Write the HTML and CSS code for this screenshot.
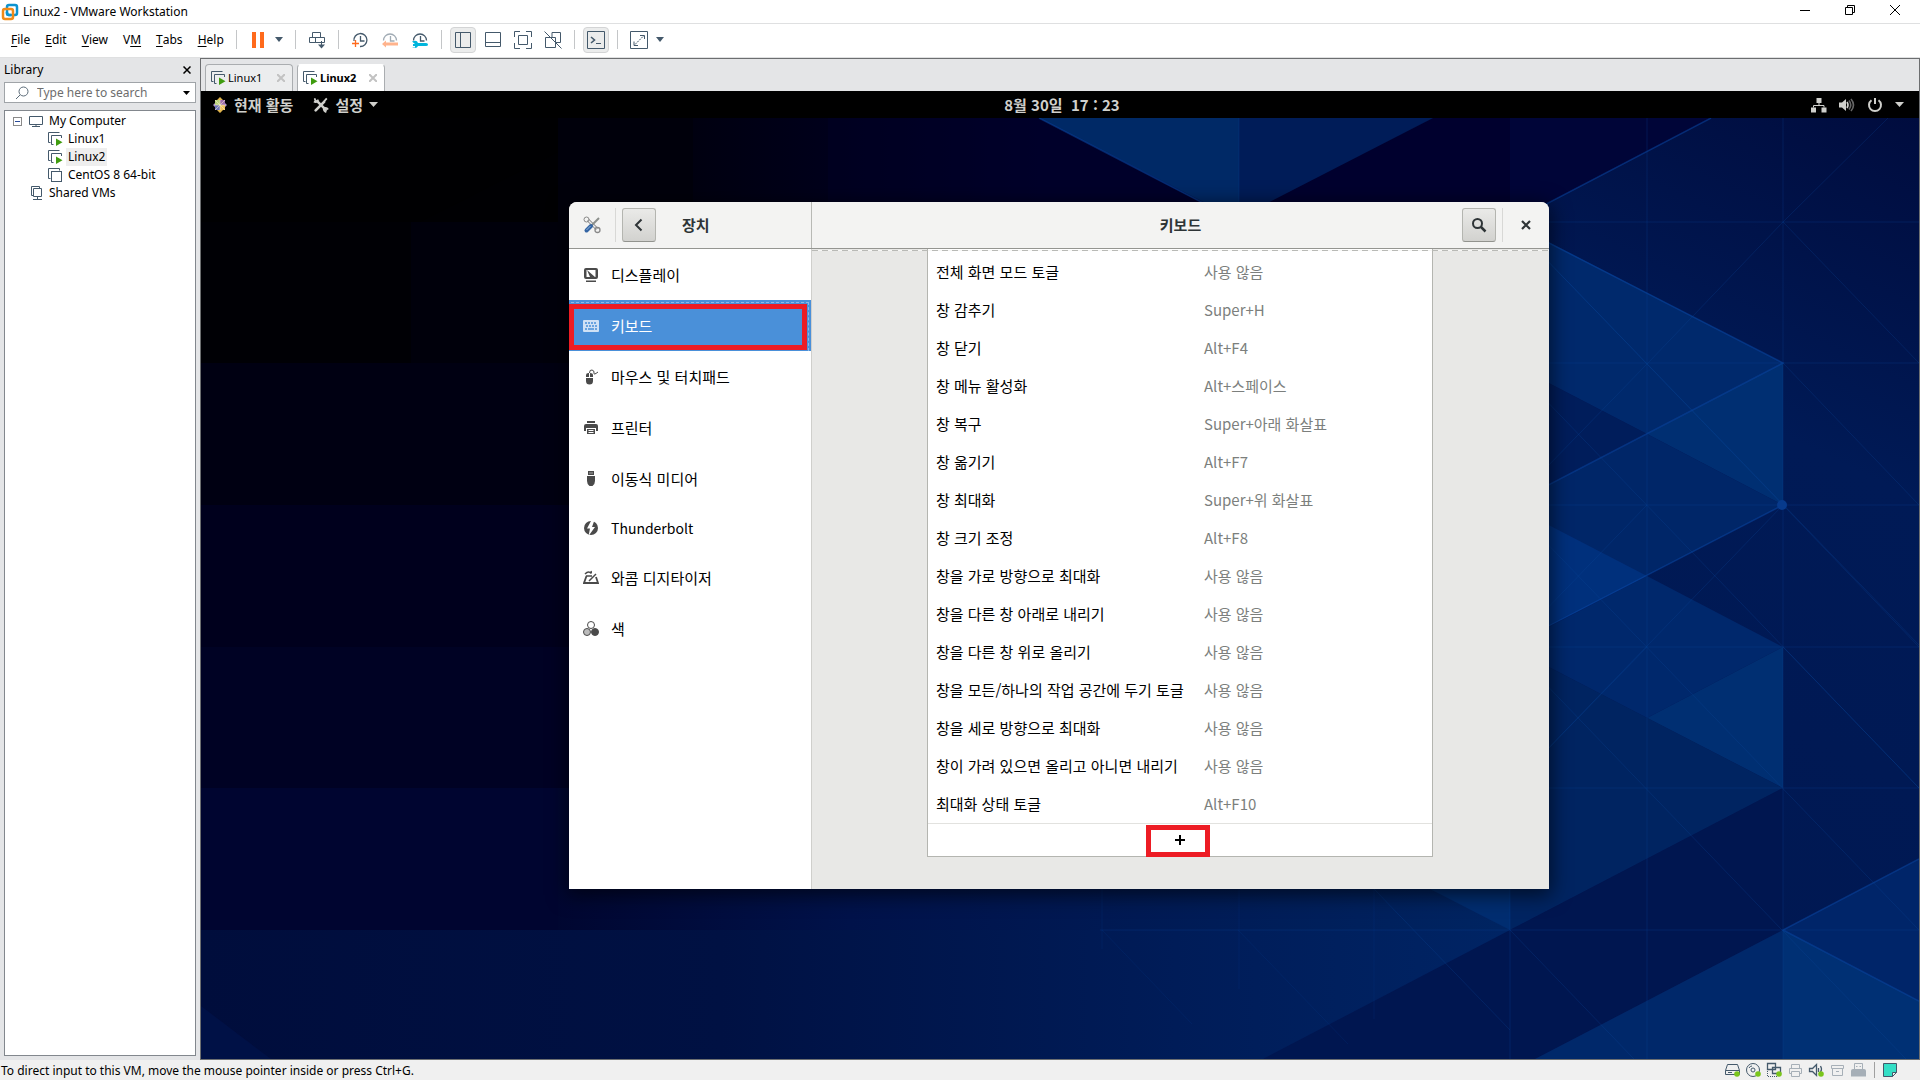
FILE: index.html
```html
<!DOCTYPE html>
<html lang="ko">
<head>
<meta charset="utf-8">
<title>Linux2 - VMware Workstation</title>
<link rel="stylesheet" href="styles.css">
</head>
<body>
<svg class="defs" aria-hidden="true">
  <symbol id="vm" viewBox="0 0 16 16"><path d="M3.500 11.500H1.500V1.500H12.500V3.500" fill="none" stroke="#44596b"/><rect x="4.500" y="4.500" width="10" height="10" fill="#fff" stroke="#44596b"/></symbol>
  <symbol id="vm-on" viewBox="0 0 16 16"><path d="M3.500 11.500H1.500V1.500H12.500M6.500 13.500H4.500V4.500H14.500V7" fill="none" stroke="#44596b"/><path d="M9 7.500v7.500l6.500-3.700z" fill="#3f9c0f"/></symbol>
  <symbol id="clock" viewBox="0 0 18 18"><path d="M2.500 9.500a6.500 6.500 0 1 1 13 0M9.500 5v5h4" fill="none" stroke="currentColor" stroke-width="1.300"/></symbol>
</svg>

<header class="titlebar">
  <svg width="18" height="18" viewBox="0 0 18 18" fill="none" stroke-width="2.500"><rect x="6" y="2" width="10" height="10" rx="2" stroke="#0d93cf"/><rect x="2" y="6" width="10" height="10" rx="2" stroke="#f28a17"/><path d="M6 9v1q0 2 2 2h2" stroke="#0d93cf"/></svg>
  <h1 class="titlebar-text">Linux2 - VMware Workstation</h1>
  <div class="window-buttons">
    <button aria-label="Minimize"><svg width="12" height="12"><path d="M1 6.500h10" stroke="#000"/></svg></button>
    <button aria-label="Restore"><svg width="12" height="12" fill="none" stroke="#000"><path d="M1.500 3.500h7v7h-7zM3.500 3.500v-2h7v7h-2"/></svg></button>
    <button aria-label="Close"><svg width="12" height="12" stroke="#000"><path d="M1 1l10 10M11 1L1 11"/></svg></button>
  </div>
</header>

<div class="menubar">
  <nav class="menu">
    <button><u>F</u>ile</button><button><u>E</u>dit</button><button><u>V</u>iew</button><button>V<u>M</u></button><button><u>T</u>abs</button><button><u>H</u>elp</button>
  </nav>
  <div class="toolbar">
    <i class="sep"></i>
    <button aria-label="Suspend"><svg width="18" height="18"><path d="M3 1h4v16H3zM11 1h4v16h-4z" fill="#ff6a1c"/></svg></button>
    <button class="drop" aria-label="Power options"><svg width="8" height="5"><path d="M0 0h8L4 5z" fill="#44596b"/></svg></button>
    <i class="sep"></i>
    <button aria-label="Send Ctrl+Alt+Del"><svg width="18" height="18" fill="none" stroke="#44596b"><path d="M4.500 1.500h8v5h-8zM1.500 6.500h6v5h-6zM7.500 6.500h9v5h-9zM13.500 10v6"/><path d="M10 13.500h7l-3.500 4z" fill="#44596b" stroke="none"/></svg></button>
    <i class="sep"></i>
    <button aria-label="Take snapshot"><svg width="18" height="18" fill="none" stroke="#44596b" stroke-width="1.300"><path d="M3 10a6.500 6.500 0 1 1 6 5.500M9.500 5v5h4"/><path d="M4.500 9v7M1 12.500h7" stroke="#ff6a1c"/></svg></button>
    <button aria-label="Revert snapshot"><svg class="faded" width="18" height="18"><use href="#clock"/><path d="M1 13l4-3.500v2h12v3H5v2z" fill="#ff6a1c"/></svg></button>
    <button aria-label="Manage snapshots"><svg class="slate" width="18" height="18"><use href="#clock"/><path d="M1 10.500q5-2 6 1.500h8q2 0 2 1.500t-2 1.500H7q-1 3-6 1.500h3v-1.500H2v-2h2z" fill="#00b5dc"/></svg></button>
    <i class="sep"></i>
    <button class="on" aria-label="Show library"><svg width="18" height="18" fill="none" stroke="#44596b"><path d="M1.500 1.500h15v15h-15zM6.500 1.500v15"/></svg></button>
    <button aria-label="Show thumbnails"><svg width="18" height="18" fill="none" stroke="#44596b"><path d="M1.500 1.500h15v14h-15zM1.500 11.500h15"/></svg></button>
    <button aria-label="Full screen"><svg width="18" height="18" fill="none" stroke="#44596b"><path d="M.5 6V.5H6M12 .5h5.500V6M17.500 12v5.500H12M6 17.500H.5V12M4.500 4.500h9v9h-9z"/></svg></button>
    <button aria-label="Unity"><svg width="18" height="18" fill="none" stroke="#44596b"><path d="M8 6.500V1.500h8.500v10H12M6 6.500H1.500v10h10V9M6.500 6.500h5V12M.5 .5l17 17"/></svg></button>
    <i class="sep"></i>
    <button class="on" aria-label="Console view"><svg width="18" height="18" fill="none" stroke="#44596b"><path d="M.5 .5h17v17H.5zM9 12.500h5"/><path d="M4 6l3.500 3L4 12" stroke-width="1.600"/></svg></button>
    <i class="sep"></i>
    <button aria-label="Stretch guest"><svg width="18" height="18" fill="none" stroke="#44596b"><path d="M.5 .5h17v17H.5zM10 4.500h4.500V8M4 10.500v4h4"/><path d="M5 13.500l9-9" stroke-dasharray="2 1"/></svg></button>
    <button class="drop" aria-label="Stretch options"><svg width="8" height="5"><path d="M0 0h8L4 5z" fill="#44596b"/></svg></button>
  </div>
</div>

<div class="workspace">
  <aside class="library">
    <div class="library-head"><h2>Library</h2><button aria-label="Close library"><svg width="8" height="8" stroke="#000" stroke-width="1.500"><path d="M.5 .5l7 7M7.500 .5l-7 7"/></svg></button></div>
    <div class="search">
      <svg width="14" height="14" fill="none" stroke="#5b6b78"><circle cx="8.500" cy="5.500" r="4.500"/><path d="M5 9l-4 4"/></svg>
      <input type="text" placeholder="Type here to search" aria-label="Type here to search">
      <svg width="7" height="4"><path d="M0 0h7L3.500 4z"/></svg>
    </div>
    <ul class="tree">
      <li><svg width="9" height="9" fill="#fff"><rect x=".5" y=".5" width="8" height="8" stroke="#8a8a8a"/><path d="M2 4.500h5" stroke="#2a4b9a"/></svg><svg class="node" width="16" height="16" fill="none" stroke="#44596b"><path d="M1.500 3.500h13v8h-13zM8 11v3M4 13.500h8"/></svg><span>My Computer</span></li>
      <li class="child"><svg width="16" height="16"><use href="#vm-on"/></svg><span>Linux1</span></li>
      <li class="child"><svg width="16" height="16"><use href="#vm-on"/></svg><span class="current">Linux2</span></li>
      <li class="child"><svg width="16" height="16"><use href="#vm"/></svg><span>CentOS 8 64-bit</span></li>
      <li class="shared"><svg class="node" width="16" height="16" fill="none" stroke="#44596b"><path d="M5 10.500H3.500V1.500h8V3M5.500 3.500h8v8h-8zM9.500 12v2M5 14.500h9"/></svg><span>Shared VMs</span></li>
    </ul>
  </aside>

  <main class="viewer">
    <div class="tabs">
      <div class="tab"><svg width="16" height="16"><use href="#vm-on"/></svg><a href="#linux1">Linux1</a><button aria-label="Close Linux1"><svg width="8" height="8" stroke="#c2c2c2" stroke-width="2"><path d="M0 0l8 8M8 0L0 8"/></svg></button></div>
      <div class="tab active"><svg width="16" height="16"><use href="#vm-on"/></svg><a href="#linux2">Linux2</a><button aria-label="Close Linux2"><svg width="8" height="8" stroke="#c2c2c2" stroke-width="2"><path d="M0 0l8 8M8 0L0 8"/></svg></button></div>
    </div>

    <div class="guest">
      <div class="topbar">
        <div class="topbar-left">
          <button><svg width="16" height="16"><path d="M1 8l3-3v6zM15 8l-3-3v6z" fill="#b59ad0"/><path d="M8 0l3 3H5zM8 16l3-3H5z" fill="#e3b64d"/><rect x="3" y="3" width="5" height="5" fill="#b9d27c"/><rect x="8" y="3" width="5" height="5" fill="#a06fae"/><rect x="3" y="8" width="5" height="5" fill="#6f75b9"/><rect x="8" y="8" width="5" height="5" fill="#f0c25e"/><path d="M8 3v10M3 8h10M3 3l10 10M13 3L3 13" stroke="#f4eccc" stroke-width=".6"/></svg>현재 활동</button>
          <button><svg width="16" height="16" viewBox="0 0 18 18" fill="none" stroke="#d0d0cc"><path d="M5.500 5.500l9 9" stroke-width="2.800" stroke-linecap="round"/><path d="M3 15l9.500-9.500" stroke-width="3" stroke-linecap="round"/><path d="M2 1.500q0 3.500 4 4M1 5q3 2 5-2M12 13q3-2 5 1M12 13q0 3 3 4M12.500 5l3-3.500" stroke-width="2"/></svg>설정<svg width="9" height="5"><path d="M0 0h9L4.500 5z" fill="#d0d0cc"/></svg></button>
        </div>
        <time>8월 30일&nbsp; 17 : 23</time>
        <div class="topbar-right">
          <svg width="16" height="16" fill="#d0d0cc"><path d="M5.500 1h5v5h-5zM0 10.500h5v5H0zM10.500 10.500h5v5h-5z"/><path d="M8 6v2.500M2.500 10.500v-2h10.500v2" fill="none" stroke="#d0d0cc"/></svg>
          <svg width="16" height="16" fill="none"><path d="M0 5.500h3L7 2v12l-4-3.500H0z" fill="#d0d0cc"/><path d="M8 5q2 3 0 6" stroke="#d0d0cc" stroke-width="1.600"/><path d="M10 3.500q3.500 4.500 0 9M12 2q5 6 0 12" stroke="#666" stroke-width="1.600"/></svg>
          <svg width="16" height="16" fill="none" stroke="#d0d0cc" stroke-width="2"><path d="M4.500 3.200a6 6 0 1 0 7 0M8 1v6"/></svg>
          <svg width="9" height="5"><path d="M0 0h9L4.500 5z" fill="#d0d0cc"/></svg>
        </div>
      </div>

      <div class="desktop">
        <svg class="wallpaper" viewBox="201 118 1718 941" preserveAspectRatio="xMidYMid slice" aria-hidden="true">
          <defs>
            <linearGradient id="base" x1="201" y1="0" x2="1500" y2="0" gradientUnits="userSpaceOnUse"><stop offset="0" stop-color="#000220"/><stop offset=".27" stop-color="#000630"/><stop offset=".5" stop-color="#00124a"/><stop offset="1" stop-color="#002461"/></linearGradient>
            <linearGradient id="low" x1="201" y1="0" x2="1500" y2="0" gradientUnits="userSpaceOnUse"><stop offset="0" stop-color="#000d3c"/><stop offset=".4" stop-color="#001143"/><stop offset=".75" stop-color="#001c58"/><stop offset="1" stop-color="#002464"/></linearGradient>
            <linearGradient id="north" x1="693" y1="0" x2="1039" y2="0" gradientUnits="userSpaceOnUse"><stop offset="0" stop-color="#000010"/><stop offset="1" stop-color="#00002c"/></linearGradient>
            <linearGradient id="east" x1="1550" y1="900" x2="1919" y2="118" gradientUnits="userSpaceOnUse"><stop offset="0" stop-color="#001852"/><stop offset=".6" stop-color="#001a56"/><stop offset="1" stop-color="#000c3e"/></linearGradient>
          </defs>
          <path d="M201 118h1718v941H201z" fill="url(#base)"/>
          <path d="M201 118h357v104H201z" fill="#000002"/><path d="M201 222h210v141H201z" fill="#000005"/><path d="M411 222h170v141H411z" fill="#00000b"/>
          <path d="M201 363h380v142H201z" fill="#000012"/><path d="M201 505h380v142H201z" fill="#00001d"/><path d="M201 647h380v141H201z" fill="#000224"/><path d="M201 788h357v142H201z" fill="#000530"/>
          <path d="M558 118h135v104H558z" fill="#00000b"/><path d="M693 118h346l200 104H693z" fill="url(#north)"/><path d="M828 118h211l165 84H828z" fill="#000028" opacity=".4"/><path d="M420 222l138-70v70z" fill="#000003"/>
          <path d="M201 930h1320v129H201z" fill="url(#low)"/>
          <path d="M201 1006l70 53h-70z" fill="#001146"/>
          <path d="M1039 118h200v102z" fill="#002966"/><path d="M1239 118h194l-194 101z" fill="#001c58"/>
          <path d="M1433 118h278l-220 115h-282z" fill="#00002e"/><path d="M1510 118h201l-201 105z" fill="#000538"/>
          <path d="M1711 118h208v941h-409V223z" fill="url(#east)"/>
          <path d="M1510 222l273 141-136 71-137-71z" fill="#00296c"/>
          <path d="M1783 363v142l-136-71z" fill="#002f72"/>
          <path d="M1510 363l137 71-137 70z" fill="#001d5b"/>
          <path d="M1647 434l136 71-273 141V505z" fill="#002668"/>
          <path d="M1510 505l137 71-137 70z" fill="#00307c"/>
          <path d="M1647 576l136 71-136 71-137-71z" fill="#00286c"/>
          <path d="M1783 647v141l-136-70z" fill="#002f72"/>
          <path d="M1510 647l273 141-273 142z" fill="#002461"/>
          <path d="M1430 889h80v41z" fill="#002d70"/>
          <path d="M1783 788v142l-248 129h-272l247-129z" fill="#001650"/>
          <path d="M1783 930v129h-248z" fill="#00286a"/><path d="M1783 930l136-71v142z" fill="#002569"/><path d="M1783 930l136 71v58h-136z" fill="#003074"/>
          <g fill="none" stroke="#0a4aa8" stroke-opacity=".5" stroke-width="1.500"><path d="M1039 118l170 88M1711 118l-201 105 273 140-273 142M1510 646l273-141M1919 859l-136 71 136 71"/></g>
          <g fill="none" stroke="#0a4aa0" stroke-opacity=".25"><path d="M1100 930h819M1510 222h409M1510 363h409M1510 505h409M1510 647h409M1510 788h409M1239 118v100M1510 889v170M1647 118v941M1783 118v941"/><path d="M1783 222l136 141M1783 363l136 142M1783 505l136 142M1783 647l136 141M1510 222l409 423M1510 222l273 283M1510 363l409 425M1510 505l409 425M1510 647l396 412M1510 930l124 129M1374 889l136 141M1510 505l137-141 136-142 105-104M1510 647l137-142M1510 788l273-283M1510 788l137-141"/></g>
          <path d="M1102 889v60M1239 889v100M1374 889v130M1238 930l110 114M1102 930l90 94" fill="none" stroke="#0a4aa0" stroke-opacity=".15"/>
          <circle cx="1782" cy="505" r="5" fill="#073a8c"/>
        </svg>

        <section class="settings">
          <header class="headerbar">
            <div class="header-left">
              <svg class="app-icon" width="18" height="18" fill="none"><path d="M5 4l9 9" stroke="#777" stroke-width="3"/><path d="M5 4l9 9" stroke="#eee" stroke-width="1.500"/><circle cx="3.500" cy="3.500" r="2.500" stroke="#888"/><circle cx="14.500" cy="14" r="2.500" stroke="#888" stroke-width="1.300"/><path d="M16 2L8 10" stroke="#8b8f8b" stroke-width="2"/><path d="M8 10l-4.500 4.500" stroke="#3465a4" stroke-width="4" stroke-linecap="round"/><path d="M7.500 10L3.500 14" stroke="#8fb5e0"/></svg>
              <i class="rule"></i>
              <button class="raised" aria-label="뒤로"><svg width="16" height="16" fill="none" stroke="#2e3436" stroke-width="2"><path d="M10.500 2.500L5 8l5.500 5.500"/></svg></button>
              <h2>장치</h2>
            </div>
            <div class="header-right">
              <h2>키보드</h2>
              <div class="header-actions">
                <button class="raised" aria-label="검색"><svg width="16" height="16" fill="none" stroke="#2e3436"><circle cx="6.500" cy="6.500" r="4.500" stroke-width="2"/><path d="M10 10l4.500 4.500" stroke-width="2.500"/></svg></button>
                <i class="rule"></i>
                <button class="close" aria-label="닫기"><svg width="10" height="10" stroke="#2e3436" stroke-width="2.200"><path d="M1 1l8 8M9 1L1 9"/></svg></button>
              </div>
            </div>
          </header>
          <div class="settings-body">
            <nav class="categories">
              <a href="#display"><svg width="16" height="16" fill="#4a4a4a"><path fill-rule="evenodd" d="M3 1h10q2 0 2 2v7q0 2-2 2H3q-2 0-2-2V3q0-2 2-2zM3.500 3v7h9V3z"/><path d="M4 3l8 7H7zM3 13.500h10V15H3z"/></svg><span>디스플레이</span></a>
              <a href="#keyboard" class="selected"><svg width="16" height="16"><rect y="2" width="16" height="12" rx="1" fill="#cfe1f5"/><path d="M2 5h12M3 8h11" stroke="#4a90d9" stroke-width="1.700" stroke-dasharray="2 1"/><path d="M2 11h2M5 11h6M12 11h2" stroke="#4a90d9" stroke-width="1.700"/></svg><span>키보드</span></a>
              <a href="#mouse"><svg width="16" height="16" fill="#4a4a4a"><path d="M3 8V6q0-2 2.500-2H6v4zM7 4q3 0 3 2v2H7zM3 9h7v3q0 3.500-3.500 3.500T3 12z"/><path d="M6.500 4q0-3.500 2.500-3t2 3 4-1" fill="none" stroke="#4a4a4a"/></svg><span>마우스 및 터치패드</span></a>
              <a href="#printer"><svg width="16" height="16" fill="#4a4a4a"><path d="M4 1h8v2H4zM3 4h10q2 0 2 2v5h-2V8H3v3H1V6q0-2 2-2z"/><path fill-rule="evenodd" d="M4 9h8v5H4zM5.500 10v1h5v-1zM5.500 12v1h5v-1z"/></svg><span>프린터</span></a>
              <a href="#media"><svg width="16" height="16" fill="#4a4a4a"><path fill-rule="evenodd" d="M5 0h6v4H5zM6.500 1.500v1h1v-1zM8.500 1.500v1h1v-1z"/><path d="M4 5h8v5q0 3-2.500 5h-3Q4 13 4 10z"/></svg><span>이동식 미디어</span></a>
              <a href="#thunderbolt" class="latin"><svg width="16" height="16"><circle cx="8" cy="8" r="7" fill="#4a4a4a"/><path d="M8.500 0L4 8.500h3L5.500 16 12 7H9l2.500-7z" fill="#fff"/></svg><span>Thunderbolt</span></a>
              <a href="#wacom"><svg width="16" height="16" fill="none" stroke="#4a4a4a"><path d="M3.500 6L1 13h14l-2-6" stroke-width="1.800"/><path d="M6 11l7-7M3 6h6M2 4q3-3 5-1.500T8 1" stroke-width="1.500"/></svg><span>와콤 디지타이저</span></a>
              <a href="#color"><svg width="16" height="16" stroke="#4a4a4a"><circle cx="8" cy="4" r="3.500" fill="#fff"/><circle cx="4" cy="11" r="3.500" fill="#bbb"/><circle cx="12" cy="11" r="3.500" fill="#4a4a4a"/></svg><span>색</span></a>
            </nav>
            <div class="content">
              <div class="panel">
                <table class="shortcuts">
                  <tr><th scope="row">전체 화면 모드 토글</th><td>사용 않음</td></tr>
                  <tr><th scope="row">창 감추기</th><td>Super+H</td></tr>
                  <tr><th scope="row">창 닫기</th><td>Alt+F4</td></tr>
                  <tr><th scope="row">창 메뉴 활성화</th><td>Alt+스페이스</td></tr>
                  <tr><th scope="row">창 복구</th><td>Super+아래 화살표</td></tr>
                  <tr><th scope="row">창 옮기기</th><td>Alt+F7</td></tr>
                  <tr><th scope="row">창 최대화</th><td>Super+위 화살표</td></tr>
                  <tr><th scope="row">창 크기 조정</th><td>Alt+F8</td></tr>
                  <tr><th scope="row">창을 가로 방향으로 최대화</th><td>사용 않음</td></tr>
                  <tr><th scope="row">창을 다른 창 아래로 내리기</th><td>사용 않음</td></tr>
                  <tr><th scope="row">창을 다른 창 위로 올리기</th><td>사용 않음</td></tr>
                  <tr><th scope="row">창을 모든/하나의 작업 공간에 두기 토글</th><td>사용 않음</td></tr>
                  <tr><th scope="row">창을 세로 방향으로 최대화</th><td>사용 않음</td></tr>
                  <tr><th scope="row">창이 가려 있으면 올리고 아니면 내리기</th><td>사용 않음</td></tr>
                  <tr><th scope="row">최대화 상태 토글</th><td>Alt+F10</td></tr>
                </table>
                <button class="add" aria-label="바로 가기 추가"><svg width="10" height="10" stroke="#000" stroke-width="2"><path d="M0 5h10M5 0v10"/></svg></button>
              </div>
            </div>
          </div>
        </section>
      </div>
    </div>
  </main>
</div>

<footer class="statusbar">
  <p>To direct input to this VM, move the mouse pointer inside or press Ctrl+G.</p>
  <div class="devices">
    <svg width="17" height="16" fill="none" stroke="#44596b"><path d="M3.500 2.500h10l2 6v4h-14v-4zM1.500 8.500h14M4 10.500h4"/><circle cx="13" cy="12" r="2.800" fill="#7ac51b" stroke="none"/></svg>
    <svg width="17" height="16" fill="none" stroke="#44596b"><circle cx="8" cy="8" r="6.500"/><circle cx="8" cy="8" r="2"/><path d="M4 6q1-2 3-2"/><circle cx="13" cy="12" r="2.800" fill="#7ac51b" stroke="none"/></svg>
    <svg width="17" height="16" fill="none" stroke="#44596b"><path d="M1.500 1.500h8v6h-8zM6.500 5.500h8v6h-8z" stroke-width="1.300"/><path d="M1.500 9v5.500H11" stroke-dasharray="1 1"/><circle cx="13" cy="12" r="2.800" fill="#7ac51b" stroke="none"/></svg>
    <svg width="17" height="16" fill="none" stroke="#a6afb7"><path d="M4.500 6V2.500h8V6M4 11.500H2.500v-5h12v5H13M4.500 9.500h8v5h-8z"/></svg>
    <svg width="17" height="16" fill="none" stroke="#44596b"><path d="M1.500 6.500h3l4-4v11l-4-4h-3zM10.500 6v4M12.500 4q2 3 0 6" stroke-width="1.300"/><circle cx="13" cy="12" r="2.800" fill="#7ac51b" stroke="none"/></svg>
    <svg width="17" height="16" fill="none" stroke="#a6afb7"><path d="M2.500 3.500h12v3h-12zM3.500 6.500h10v7h-10zM7 9.500h3"/></svg>
    <svg width="17" height="16" fill="#a6afb7"><path d="M1 9q0-2 2-2h11q2 0 2 2v5.500H1z"/><path d="M4.500 7V1.500h8V7" fill="none" stroke="#a6afb7"/><path d="M6 4h1.500v1H6zM9.500 4H11v1H9.500z"/></svg>
    <i></i>
    <svg width="17" height="16"><path d="M1.500 1.500h13v9l-4 4h-9z" fill="#34dfc6" stroke="#44596b"/><path d="M14.500 10.500h-4v4z" fill="#e8f5f3" stroke="#44596b"/></svg>
  </div>
</footer>
</body>
</html>
```
FILE: styles.css
```css
*, *::before, *::after { box-sizing: border-box; }
html, body { height: 100%; }
body {
  margin: 0;
  display: flex;
  flex-direction: column;
  overflow: hidden;
  background: #fff;
  color: #000;
  font: 12px/18px "Noto Sans", "Noto Sans CJK KR", sans-serif;
}
h1, h2, p, ul { margin: 0; padding: 0; font-size: inherit; font-weight: inherit; }
ul { list-style: none; }
button { padding: 0; border: 0; background: none; color: inherit; font: inherit; display: flex; align-items: center; justify-content: center; }
a { color: inherit; text-decoration: none; }
svg { display: block; flex: none; }
.defs { position: absolute; width: 0; height: 0; }

.titlebar { display: flex; align-items: center; gap: 4px; height: 24px; padding: 0 3px 0 1px; border-bottom: 1px solid #dfe0e1; }
.titlebar-text { flex: 1; }
.window-buttons { display: flex; padding-bottom: 4px; }
.window-buttons button { width: 45px; }

.menubar { display: flex; align-items: center; height: 34px; padding-bottom: 2px; border-bottom: 1px solid #dfe0e1; }
.menu { flex: 0 0 232px; display: flex; gap: 15px; padding-left: 11px; }
.menu u { text-underline-offset: 2px; }
.toolbar { display: flex; align-items: center; gap: 4px; }
.toolbar button { width: 26px; height: 26px; }
.toolbar .on { background: #ebecec; border: 1px solid #d3d4d5; border-radius: 4px; }
.toolbar .drop { width: 16px; margin-left: -4px; }
.sep { width: 1px; height: 19px; margin: 0 4px; background: #c4c6c8; }
.faded { color: #44596b; opacity: .5; }
.slate { color: #44596b; }

.workspace { flex: 1; display: flex; min-height: 0; background: #e4e5e7; }
.library { flex: 0 0 200px; display: flex; flex-direction: column; padding: 0 4px 4px; }
.library-head { display: flex; align-items: center; justify-content: space-between; height: 24px; padding-right: 5px; }
.search { display: flex; align-items: center; height: 21px; width: 192px; padding: 0 5px 0 10px; gap: 8px; background: #fff; border: 1px solid #a0a4a8; }
.search input { flex: 1; min-width: 0; padding: 0; border: 0; outline: 0; background: none; font: inherit; }
.search input::placeholder { color: #6d6d6d; opacity: 1; }
.tree { flex: 1; width: 192px; margin-top: 7px; padding: 1px 8px; background: #fff; border: 1px solid #82878d; }
.tree li { display: flex; align-items: center; height: 18px; }
.tree .node { margin: 0 3px 0 6px; }
.tree .child { gap: 3px; padding-left: 34px; }
.tree .shared { padding-left: 9px; }
.tree span { padding: 0 2px; white-space: nowrap; }
.tree .current { background: #eee; }

.viewer { flex: 1; min-width: 0; display: flex; flex-direction: column; border: 1px solid #6c6e70; }
.tabs { display: flex; align-items: flex-end; gap: 4px; height: 32px; padding-left: 4px; }
.tab { display: flex; align-items: center; gap: 2px; width: 88px; height: 27px; padding: 0 7px 0 4px; font-size: 11px; border: 1px solid #aaadb0; border-bottom: 0; border-radius: 4px 4px 0 0; background: #ecedee; }
.tab a { flex: 1; }
.tab.active { background: #fff; border-color: #fff #aaadb0; font-weight: bold; }

.guest { flex: 1; min-height: 0; display: flex; flex-direction: column; font: 15px/22px "Noto Sans CJK KR", sans-serif; }
.topbar { display: grid; grid-template-columns: 1fr auto 1fr; align-items: center; height: 27px; padding: 0 15px 0 11px; background: #000; color: #d0d0cc; font-weight: bold; }
.topbar-left, .topbar-right { display: flex; align-items: center; }
.topbar-left { gap: 20px; }
.topbar-left button { gap: 6px; }
.topbar time { padding-left: 8px; }
.topbar-right { gap: 12px; justify-content: flex-end; }
.desktop { position: relative; flex: 1; min-height: 0; display: flex; justify-content: center; align-items: flex-start; padding: 84px 2px 0 0; background: #000; }
.wallpaper { position: absolute; inset: 0; width: 100%; height: 100%; }

.settings { position: relative; flex: 0 1 980px; border-radius: 8px 8px 0 0; background: #e8e8e6; box-shadow: 0 4px 20px 2px rgba(0, 0, 0, .6); }
.headerbar { display: grid; grid-template-columns: 243px 1fr; height: 47px; background: #f3f3f2; border-bottom: 1px solid #949591; border-radius: 8px 8px 0 0; color: #2e3436; }
.headerbar h2 { font-weight: bold; }
.header-left { display: flex; align-items: center; gap: 6px; padding-left: 14px; border-right: 1px solid #b8b9b5; }
.header-left h2 { padding-left: 20px; }
.app-icon { margin-right: 8px; }
.rule { width: 1px; height: 34px; background: #d8d8d6; }
.raised { width: 34px; height: 34px; border: 1px solid #b4b5b0; border-bottom-color: #92938e; border-radius: 3px; background: linear-gradient(#eaeae8, #d2d2cf); }
.header-right { display: grid; grid-template-columns: 1fr auto 1fr; align-items: center; }
.header-right h2 { grid-column: 2; }
.header-actions { display: flex; align-items: center; justify-content: flex-end; gap: 6px; padding-right: 6px; }
.close { width: 34px; height: 34px; }

.settings-body { display: grid; grid-template-columns: 243px 1fr; }
.categories { background: #fff; border-right: 1px solid #cfcfcc; }
.categories a { position: relative; display: flex; align-items: center; gap: 12px; height: 51px; padding: 0 14px; }
.categories .latin { height: 48px; font-size: 14px; }
.categories .selected { background: #4a90d9; color: #fff; }
.categories .selected::before { content: ""; position: absolute; inset: 2px 2px 0; border: 1px dashed #8db8e6; border-width: 1px 1px 0 0; }
.categories .selected::after { content: ""; position: absolute; inset: 4px 4px 1px 0; border: 5px solid #ed1c24; }

.content { position: relative; display: flex; justify-content: center; padding: 0 116px 32px 115px; }
.content::before { content: ""; position: absolute; inset: 1px 0 auto 0; height: 1px; background: repeating-linear-gradient(90deg, #b9bab6 0 6px, #f6f6f5 6px 10px); z-index: 1; }
.panel { flex: 1; padding-top: 4px; background: #fff; border: 1px solid #b4b5b0; border-top: 0; }
.shortcuts { width: 100%; table-layout: fixed; border-collapse: collapse; }
.shortcuts th { width: 268px; height: 38px; padding: 0 0 0 8px; text-align: left; font-weight: normal; white-space: nowrap; }
.shortcuts td { height: 38px; padding: 0 0 0 8px; color: #7c7f7d; }
.add { position: relative; width: 100%; height: 33px; border-top: 1px solid #e2e2df; }
.add::after { content: ""; position: absolute; inset: 1px auto -1px calc(50% - 34px); width: 64px; border: 5px solid #ed1c24; }

.statusbar { display: flex; align-items: center; justify-content: space-between; height: 20px; padding-right: 21px; background: #f0f0f0; }
.statusbar p { padding: 1px 0 0 1px; }
.devices { display: flex; align-items: center; gap: 4px; }
.devices i { width: 1px; height: 16px; margin: 0 3px; background: #a0a0a0; }
```
